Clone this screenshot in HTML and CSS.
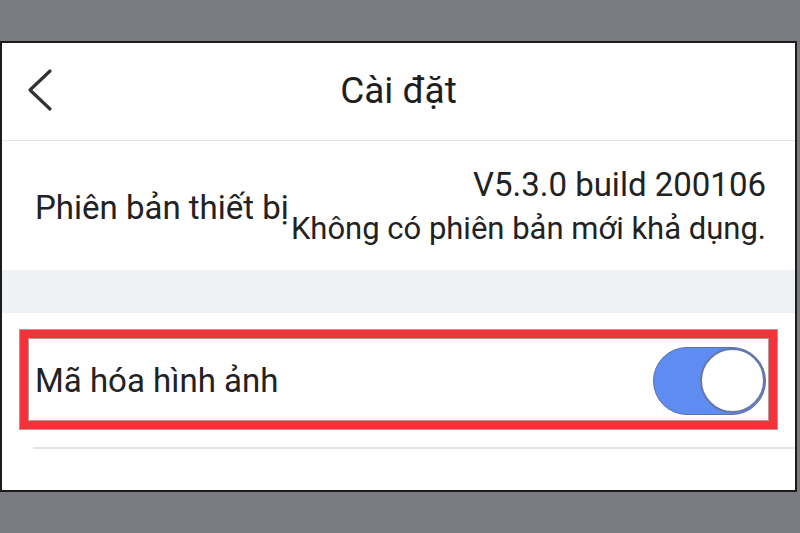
FILE: index.html
```html
<!DOCTYPE html>
<html lang="vi">
<head>
    <meta charset="UTF-8">
    <meta name="viewport" content="width=device-width, initial-scale=1.0">
    <title>Cài đặt</title>
    <link rel="stylesheet" href="styles.css">
</head>
<body>
    <div class="screen">
        <header class="topbar">
            <a href="#" class="back">
                <svg width="30" height="44" viewBox="0 0 30 44">
                    <polyline points="24,3 4,22 24,41" fill="none" stroke="#333" stroke-width="3.2" stroke-linecap="round" stroke-linejoin="round"/>
                </svg>
            </a>
            <h1>Cài đặt</h1>
            <span class="spacer"></span>
        </header>

        <div class="row version-row">
            <span class="label">Phiên bản thiết bị</span>
            <div class="version">
                <div class="build">V5.3.0 build 200106</div>
                <div>Không có phiên bản mới khả dụng.</div>
            </div>
        </div>

        <div class="gap-band"></div>

        <div class="row-wrap">
            <!-- khung đỏ đánh dấu dòng mã hóa -->
            <div class="highlight">
                <span class="label">Mã hóa hình ảnh</span>
                <div class="toggle on">
                    <span class="knob"></span>
                </div>
            </div>
            <div class="divider"></div>
        </div>
    </div>
</body>
</html>
```

FILE: styles.css
```css
body {
    margin: 0;
    padding: 0;
    background-color: #7a7b80;
    font-family: Roboto, "Noto Sans", Arial, sans-serif;
    color: #222;
    height: 533px;
    overflow: hidden;
}

.screen {
    margin-top: 41px;
    width: 797px;
    height: 451px;
    box-sizing: border-box;
    background-color: #fff;
    border: 2px solid #1c1c1e;
    display: flex;
    flex-direction: column;
}

.topbar {
    height: 97px;
    display: flex;
    align-items: center;
    border-bottom: 1px solid #e4e5e7;
    flex-shrink: 0;
}
.back {
    width: 80px;
    padding-left: 24px;
    box-sizing: border-box;
    display: flex;
    align-items: center;
    margin-top: -4px;
}
.topbar h1 {
    flex-grow: 1;
    margin: 0;
    text-align: center;
    font-size: 37px;
    font-weight: 400;
    color: #1e1e1e;
    margin-top: -2px;
}
.spacer {
    width: 80px;
}

.row {
    display: flex;
    align-items: center;
    justify-content: space-between;
}
.label {
    font-size: 33px;
}

.version-row {
    height: 129px;
    padding: 0 29px 0 33px;
    flex-shrink: 0;
}
.version-row .label {
    margin-top: 4px;
}
.version {
    text-align: right;
    font-size: 31px;
    line-height: 44px;
    margin-top: 2px;
}
.version .build {
    font-size: 33px;
}

.gap-band {
    height: 43px;
    background-color: #eff1f4;
    flex-shrink: 0;
}

.row-wrap {
    padding-top: 17px;
}
.highlight {
    margin-left: 18px;
    width: 757px;
    height: 99px;
    box-sizing: border-box;
    border: 8px solid #f3323a;
    box-shadow: 0 0 0 1px rgba(110, 20, 20, 0.45), inset 0 0 0 1px rgba(110, 20, 20, 0.45);
    display: flex;
    align-items: center;
    justify-content: space-between;
    padding: 0 3px 0 7px;
}
.highlight .label {
    margin-top: 1px;
}

.toggle {
    width: 113px;
    height: 68px;
    box-sizing: border-box;
    border-radius: 34px;
    background-color: #cfd3da;
    border: 1.5px solid #5b70ad;
    display: flex;
    align-items: center;
    justify-content: flex-start;
    margin-top: 2px;
}
.toggle.on {
    background-color: #5e8cf1;
    justify-content: flex-end;
}
.knob {
    width: 65px;
    height: 65px;
    box-sizing: border-box;
    border-radius: 50%;
    background-color: #fff;
    border: 2px solid #6778a6;
}

.divider {
    margin-top: 18px;
    margin-left: 31px;
    height: 2px;
    background-color: #e4e5e8;
}
```
